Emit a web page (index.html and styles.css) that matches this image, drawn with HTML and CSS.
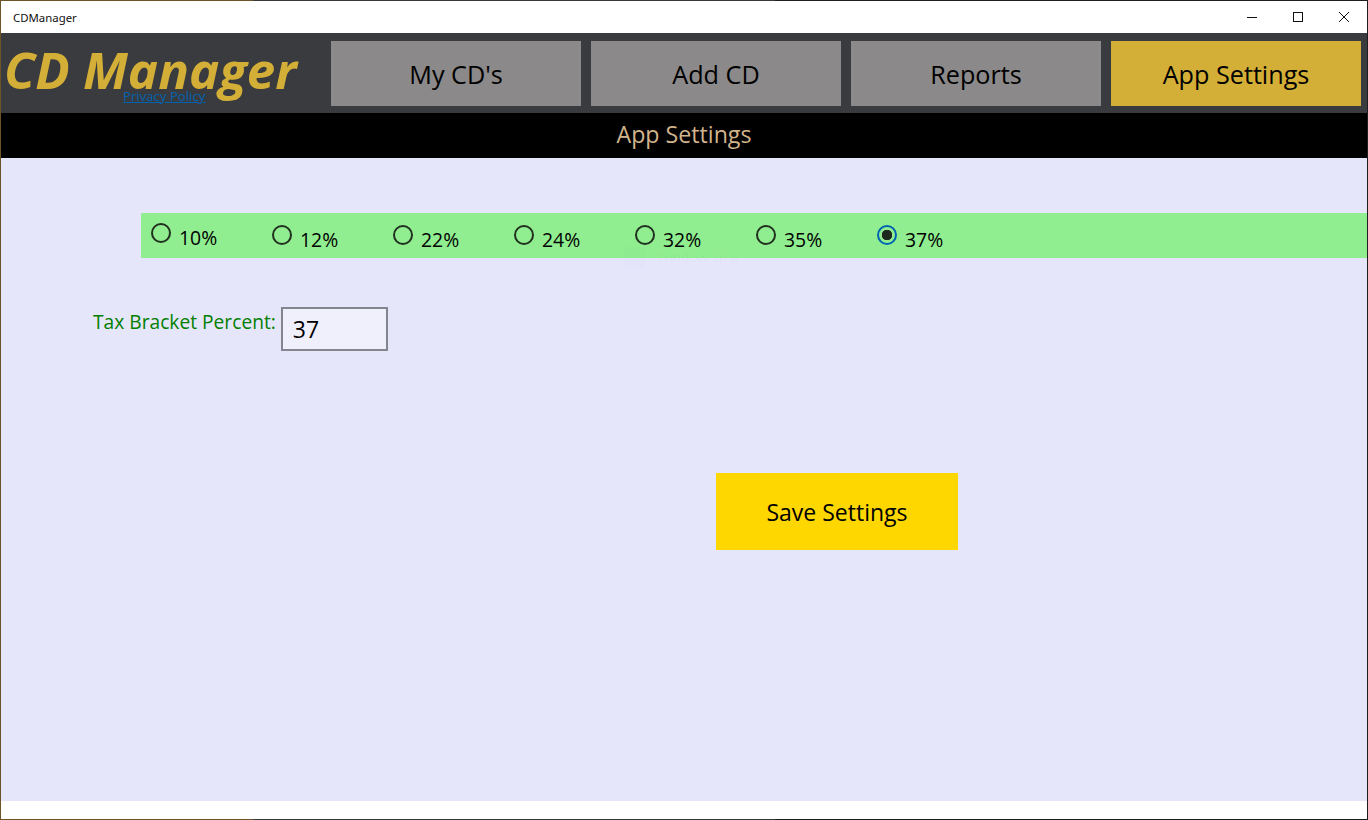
FILE: index.html
```html
<!DOCTYPE html>
<html lang="en">
<head>
<meta charset="utf-8">
<title>CDManager</title>
<link rel="stylesheet" href="styles.css">
</head>
<body>
<div class="window">
  <div class="titlebar">
    <span class="app-title">CDManager</span>
    <div class="controls">
      <span class="ctl"><svg width="12" height="12" viewBox="0 0 12 12"><path d="M1 6.5h10" stroke="#111" fill="none"/></svg></span>
      <span class="ctl"><svg width="12" height="12" viewBox="0 0 12 12"><rect x="1.5" y="1.5" width="9" height="9" stroke="#111" fill="none"/></svg></span>
      <span class="ctl"><svg width="12" height="12" viewBox="0 0 12 12"><path d="M1 1l10 10M11 1L1 11" stroke="#111" fill="none"/></svg></span>
    </div>
  </div>
  <header class="header">
    <div class="brand">
      <span class="logo">CD Manager</span>
      <a class="privacy" href="#">Privacy Policy</a>
    </div>
    <nav class="nav">
      <div class="tab">My CD's</div>
      <div class="tab">Add CD</div>
      <div class="tab">Reports</div>
      <div class="tab active">App Settings</div>
    </nav>
  </header>
  <div class="pagebar">App Settings</div>
  <main class="main">
    <div class="brackets">
      <label class="radio first"><span class="dot"></span><span class="rtext">10%</span></label>
      <label class="radio"><span class="dot"></span><span class="rtext">12%</span></label>
      <label class="radio"><span class="dot"></span><span class="rtext">22%</span></label>
      <label class="radio"><span class="dot"></span><span class="rtext">24%</span></label>
      <label class="radio"><span class="dot"></span><span class="rtext">32%</span></label>
      <label class="radio"><span class="dot"></span><span class="rtext">35%</span></label>
      <label class="radio"><span class="dot on"></span><span class="rtext">37%</span></label>
      <div class="ghost"><span class="ghost-icon"></span><span class="ghost-text">Window Snip</span></div>
    </div>
    <div class="field">
      <span class="field-label">Tax Bracket Percent:</span>
      <div class="input">37</div>
    </div>
    <div class="actions"><div class="save">Save Settings</div></div>
  </main>
  <div class="footer"></div>
</div>
</body>
</html>
```
FILE: styles.css
```css
* { box-sizing: border-box; }
html, body { margin: 0; height: 100%; }
body {
  width: 1368px;
  height: 820px;
  overflow: hidden;
  font-family: "Open Sans", "Noto Sans", sans-serif;
  color: #000;
}
.window {
  width: 1368px;
  height: 820px;
  padding: 1px;
  display: flex;
  flex-direction: column;
  background: linear-gradient(90deg, #6b5427 0, #6b5427 253px, #3a3a3a 253px, #3a3a3a 775px, #1e1e1e 775px, #1e1e1e 100%);
}
.titlebar {
  height: 32px;
  flex: none;
  background: #fff;
  display: flex;
  align-items: center;
  justify-content: space-between;
}
.app-title {
  font-size: 11.4px;
  padding-left: 12px;
  color: #111;
  font-family: "Noto Sans", sans-serif;
}
.controls { display: flex; }
.ctl {
  width: 46px;
  height: 32px;
  display: flex;
  align-items: center;
  justify-content: center;
}
.header {
  height: 80px;
  flex: none;
  background: #3a3b3f;
  display: flex;
  padding-top: 8px;
}
.brand {
  width: 330px;
  flex: none;
  position: relative;
}
.logo {
  display: block;
  padding-left: 3px;
  font-family: "Open Sans", sans-serif;
  font-size: 51px;
  line-height: 56px;
  font-weight: 700;
  font-style: italic;
  color: #d4af37;
  white-space: nowrap;
}
.privacy {
  position: absolute;
  left: 122px;
  top: 46px;
  font-size: 13.2px;
  line-height: 18px;
  color: #0063b1;
  text-decoration: underline;
}
.nav {
  display: flex;
  gap: 10px;
}
.tab {
  width: 250px;
  height: 65px;
  background: #8b8989;
  font-size: 25.2px;
  display: flex;
  align-items: center;
  justify-content: center;
}
.tab.active { background: #d4af37; }
.pagebar {
  height: 45px;
  flex: none;
  background: #000;
  color: #d2b48c;
  font-size: 23.2px;
  display: flex;
  align-items: center;
  justify-content: center;
  padding-bottom: 4px;
}
.main {
  flex: 1;
  background: #e6e6fa;
  padding-top: 55px;
  display: flex;
  flex-direction: column;
}
.brackets {
  margin-left: 140px;
  height: 45px;
  background: #90ee90;
  display: flex;
  padding-left: 10px;
  position: relative;
}
.ghost {
  position: absolute;
  left: 483px;
  top: 34px;
  display: flex;
  align-items: center;
  gap: 12px;
  pointer-events: none;
}
.ghost-icon {
  width: 21px;
  height: 21px;
  background: rgba(70, 70, 200, 0.015);
}
.ghost-text {
  font-size: 13.5px;
  line-height: 11px;
  color: rgba(90, 40, 120, 0.04);
  white-space: nowrap;
}
.radio {
  width: 121px;
  display: flex;
  padding-top: 12px;
}
.dot {
  width: 20px;
  height: 20px;
  border: 2px solid #21301f;
  border-radius: 50%;
  flex: none;
}
.dot.on {
  border-color: #0063b1;
  background: radial-gradient(circle, #1f2a1f 0 5px, transparent 5.5px);
}
.rtext {
  font-size: 19.4px;
  line-height: 24px;
  margin-left: 8px;
  margin-top: 3px;
}
.radio.first .dot { margin-top: -2px; }
.radio.first .rtext { margin-top: 1px; }
.field {
  display: flex;
  margin-top: 49px;
  margin-left: 92px;
}
.field-label {
  color: #008000;
  font-size: 19.2px;
  line-height: 30px;
  margin-right: 5px;
}
.input {
  width: 107px;
  height: 44px;
  border: 2px solid #85858f;
  background: #f0f0fc;
  font-size: 23px;
  padding-left: 10px;
  line-height: 40px;
}
.actions {
  margin-top: 122px;
  margin-left: 715px;
}
.save {
  width: 242px;
  height: 77px;
  background: #ffd700;
  font-size: 23px;
  display: flex;
  align-items: center;
  justify-content: center;
}
.footer {
  height: 18px;
  flex: none;
  background: #fff;
}
```
